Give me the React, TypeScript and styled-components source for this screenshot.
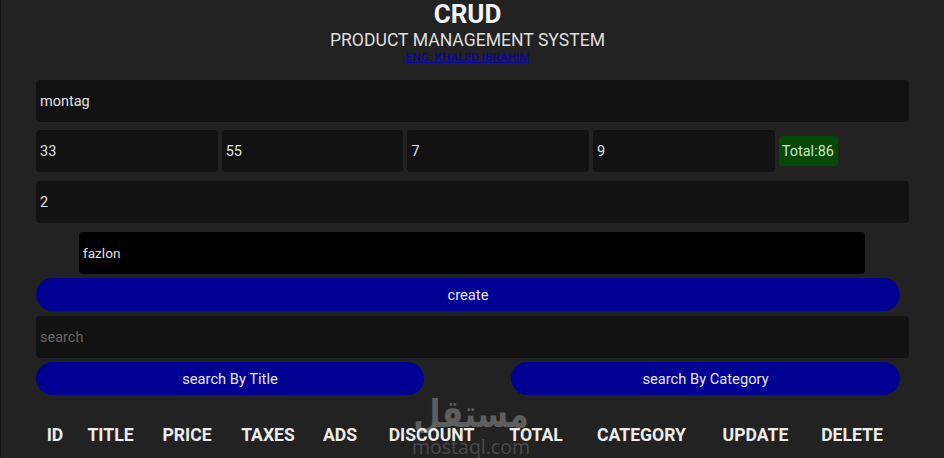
import React from 'react';
import styled, { createGlobalStyle } from 'styled-components';

const GlobalStyle = createGlobalStyle`
  html, body {
    margin: 0;
    padding: 0;
    height: 100%;
    overflow: hidden;
    background: #222222;
  }
  * {
    box-sizing: border-box;
  }
`;

const Page = styled.div`
  position: relative;
  height: 458px;
  padding: 0 35px 0 35px;
  border-left: 1px solid #141414;
  color: #fff;
  font-family: Roboto, 'Liberation Sans', sans-serif;
`;

const Header = styled.header`
  width: 863px;
  height: 80px;
  text-align: center;
`;

const Title = styled.h2`
  margin: 0;
  font-size: 26px;
  line-height: 28px;
  font-weight: 700;
  color: #f4f4f4;
`;

const Subtitle = styled.p`
  margin: 2px 0 0;
  font-size: 17.6px;
  line-height: 21px;
  font-weight: 400;
  color: #dedede;
`;

const Author = styled.a`
  display: block;
  margin-top: 0;
  font-size: 11.7px;
  line-height: 12px;
  font-weight: 500;
  color: #0a0a9c;
  text-decoration: underline;
`;

const Field = styled.input<{ $tone?: 'dark' | 'black'; $size?: number }>`
  display: block;
  width: 100%;
  height: 42px;
  padding: 0 4px;
  border: 0;
  outline: 0;
  border-radius: 4px;
  background: ${(p) => (p.$tone === 'black' ? '#000' : '#121212')};
  color: #e2e2e2;
  font-family: inherit;
  font-size: ${(p) => p.$size ?? 14.5}px;

  &::placeholder {
    color: #666;
    opacity: 1;
  }
`;

const Form = styled.section`
  position: relative;
  z-index: 1;
  display: flex;
  flex-direction: column;
`;

const PriceRow = styled.div`
  display: flex;
  align-items: center;
  gap: 4px;
  margin-top: 8px;
  margin-bottom: 9px;
`;

const PriceField = styled(Field)`
  width: 181.7px;
`;

const Total = styled.small`
  padding: 0 3px;
  width: 59px;
  height: 30px;
  line-height: 31px;
  border-radius: 3px;
  background: #064806;
  color: #c9e6c9;
  font-size: 14.5px;
  white-space: nowrap;
`;

const CategoryWrap = styled.div`
  width: 786px;
  margin: 9px 0 4px 43px;
`;

const SearchWrap = styled.div`
  margin: 5px 0 4px;
`;

const Pill = styled.button`
  display: block;
  height: 33px;
  border: 0;
  border-radius: 17px;
  background: #000093;
  color: #e6e6e6;
  font-family: inherit;
  font-size: 14.7px;
  padding: 0;
`;

const CreateButton = styled(Pill)`
  width: 864px;
`;

const SearchButtons = styled.div`
  display: grid;
  grid-template-columns: 388px 389px;
  justify-content: space-between;
  width: 864px;
`;

const Table = styled.table`
  position: relative;
  z-index: 1;
  margin-top: 25px;
  width: 860px;
  border-collapse: collapse;
  table-layout: fixed;
`;

const Th = styled.th<{ $w: number }>`
  width: ${(p) => p.$w}px;
  padding: 4px 0;
  font-size: 17.6px;
  line-height: 22px;
  font-weight: 700;
  color: #ececec;
  text-align: center;
`;

const Watermark = styled.div`
  position: absolute;
  left: 395px;
  top: 391px;
  width: 150px;
  text-align: center;
  pointer-events: none;
`;

const WatermarkLogo = styled.div`
  font-family: 'DejaVu Sans', sans-serif;
  font-size: 38px;
  font-weight: 700;
  line-height: 46px;
  color: #5e5e5e;
  transform: scaleX(0.83);
`;

const WatermarkUrl = styled.div`
  font-family: 'Open Sans', sans-serif;
  font-size: 19.5px;
  line-height: 20px;
  color: #4a4a4a;
`;

const columns: [string, number][] = [
  ['ID', 38],
  ['TITLE', 73],
  ['PRICE', 80],
  ['TAXES', 82],
  ['ADS', 62],
  ['DISCOUNT', 121],
  ['TOTAL', 88],
  ['CATEGORY', 123],
  ['UPDATE', 105],
  ['DELETE', 88],
];

const prices = ['33', '55', '7', '9'];

export default function App() {
  return (
    <Page>
      <GlobalStyle />
      <Header>
        <Title>CRUD</Title>
        <Subtitle>PRODUCT MANAGEMENT SYSTEM</Subtitle>
        <Author href="#">ENG: KHALED IBRAHIM</Author>
      </Header>
      <Form>
        <Field readOnly value="montag" />
        <PriceRow>
          {prices.map((price, i) => (
            <PriceField key={i} readOnly value={price} />
          ))}
          <Total>Total:86</Total>
        </PriceRow>
        <Field readOnly value="2" />
        <CategoryWrap>
          <Field $tone="black" $size={13.6} readOnly value="fazlon" />
        </CategoryWrap>
        <CreateButton>create</CreateButton>
        <SearchWrap>
          <Field placeholder="search" readOnly />
        </SearchWrap>
        <SearchButtons>
          <Pill>search By Title</Pill>
          <Pill>search By Category</Pill>
        </SearchButtons>
      </Form>
      <Watermark>
        <WatermarkLogo>مستقل</WatermarkLogo>
        <WatermarkUrl>mostaql.com</WatermarkUrl>
      </Watermark>
      <Table>
        <thead>
          <tr>
            {columns.map(([name, w]) => (
              <Th key={name} $w={w}>
                {name}
              </Th>
            ))}
          </tr>
        </thead>
      </Table>
    </Page>
  );
}
